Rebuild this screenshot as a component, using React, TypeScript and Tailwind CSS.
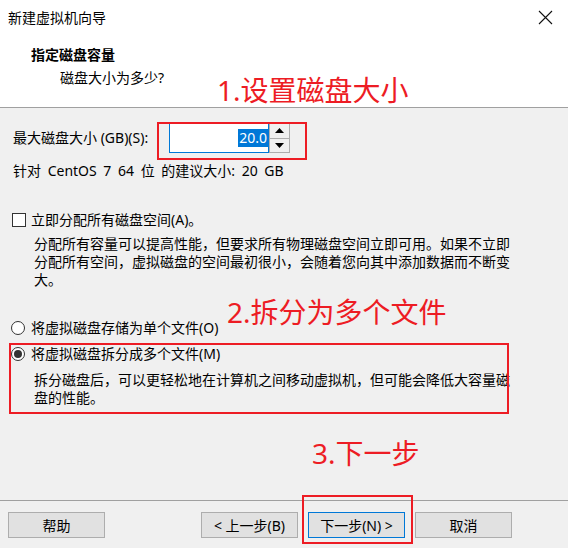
import React from "react";

const font = { fontFamily: '"Noto Sans", "Noto Sans CJK SC", sans-serif' };

function Btn({ children, primary }: { children: React.ReactNode; primary?: boolean }) {
  return (
    <div
      className={`w-[97px] h-[26px] flex items-center justify-center text-[14px] text-black bg-[#e1e1e1] border ${
        primary ? "border-[#0078d7]" : "border-[#adadad]"
      }`}
    >
      {children}
    </div>
  );
}

export default function App() {
  return (
    <div
      className="relative w-[568px] h-[548px] bg-[#f0f0f0] text-black text-[14px] flex flex-col overflow-hidden"
      style={font}
    >
      {/* Header */}
      <div className="bg-white h-[108px] border-b border-[#a0a0a0] flex flex-col">
        <div className="h-[36px] flex items-center justify-between pl-[8px] pr-[15px]">
          <span className="leading-[20px]">新建虚拟机向导</span>
          <svg width="15" height="15" viewBox="0 0 15 15" className="mt-[-1px]">
            <path d="M1 1 L14 14 M14 1 L1 14" stroke="#111" strokeWidth="1.1" fill="none" />
          </svg>
        </div>
        <div className="mt-[9px] h-[20px] leading-[20px] pl-[31px] font-bold">指定磁盘容量</div>
        <div className="mt-[3px] h-[20px] leading-[20px] pl-[60px]">磁盘大小为多少?</div>
      </div>

      {/* Body */}
      <div className="flex-1 flex flex-col">
        <div className="mt-[15px] h-[30px] flex items-center pl-[13px]">
          <span className="w-[156px] leading-[20px]">最大磁盘大小 (GB)(S):</span>
          <div className="w-[100px] h-[30px] bg-white border border-[#0078d7] flex items-center justify-end">
            <span className="bg-[#0078d7] text-white leading-[18px] px-[1px]">20.0</span>
          </div>
          <div className="w-[21px] h-[30px] border border-[#adadad] bg-[#f0f0f0] flex flex-col">
            <div className="flex-1 flex items-center justify-center border-b border-[#adadad]">
              <svg width="9" height="5" viewBox="0 0 9 5">
                <path d="M4.5 0 L9 5 L0 5 Z" fill="#000" />
              </svg>
            </div>
            <div className="flex-1 flex items-center justify-center">
              <svg width="9" height="5" viewBox="0 0 9 5">
                <path d="M0 0 L9 0 L4.5 5 Z" fill="#000" />
              </svg>
            </div>
          </div>
        </div>

        <div className="mt-[8px] h-[20px] leading-[20px] pl-[13px] [word-spacing:3px]">针对 CentOS 7 64 位 的建议大小: 20 GB</div>

        <div className="mt-[29px] h-[20px] flex items-center pl-[12px]">
          <div className="w-[14px] h-[14px] border border-[#333] bg-white" />
          <span className="ml-[5px] leading-[20px]">立即分配所有磁盘空间(A)。</span>
        </div>
        <div className="mt-[5px] pl-[34px] pr-[50px] leading-[18px]">
          <div>分配所有容量可以提高性能，但要求所有物理磁盘空间立即可用。如果不立即</div>
          <div>分配所有空间，虚拟磁盘的空间最初很小，会随着您向其中添加数据而不断变</div>
          <div>大。</div>
        </div>

        <div className="mt-[29px] h-[20px] flex items-center pl-[11px]">
          <div className="w-[14px] h-[14px] rounded-full border border-[#333] bg-white" />
          <span className="ml-[6px] leading-[20px]">将虚拟磁盘存储为单个文件(O)</span>
        </div>
        <div className="mt-[6px] h-[20px] flex items-center pl-[11px]">
          <div className="w-[14px] h-[14px] rounded-full border border-[#333] bg-white flex items-center justify-center">
            <div className="w-[8px] h-[8px] rounded-full bg-[#333]" />
          </div>
          <span className="ml-[6px] leading-[20px]">将虚拟磁盘拆分成多个文件(M)</span>
        </div>
        <div className="mt-[7px] pl-[34px] leading-[18px]">
          <div>拆分磁盘后，可以更轻松地在计算机之间移动虚拟机，但可能会降低大容量磁</div>
          <div>盘的性能。</div>
        </div>
      </div>

      {/* Footer */}
      <div className="h-[48px] border-t border-[#a0a0a0] flex items-start pt-[11px] pl-[8px] pr-[56px] justify-between">
        <Btn>帮助</Btn>
        <div className="flex gap-[10px]">
          <Btn>&lt; 上一步(B)</Btn>
          <Btn primary>下一步(N) &gt;</Btn>
          <Btn>取消</Btn>
        </div>
      </div>

      {/* Annotations */}
      <div className="absolute left-[217px] top-[75px] text-[28px] leading-[30px] text-[#ed1c24]">1.设置磁盘大小</div>
      <div className="absolute left-[227px] top-[297px] text-[28px] leading-[30px] text-[#ed1c24]">2.拆分为多个文件</div>
      <div className="absolute left-[312px] top-[438px] text-[28px] leading-[30px] text-[#ed1c24]">3.下一步</div>

      <div className="absolute left-[157px] top-[122px] w-[150px] h-[38px] border-2 border-[#ed1c24]" />
      <div className="absolute left-[9px] top-[343px] w-[500px] h-[71px] border-2 border-[#ed1c24]" />
      <div className="absolute left-[302px] top-[495px] w-[111px] h-[49px] border-2 border-[#ed1c24]" />
    </div>
  );
}
